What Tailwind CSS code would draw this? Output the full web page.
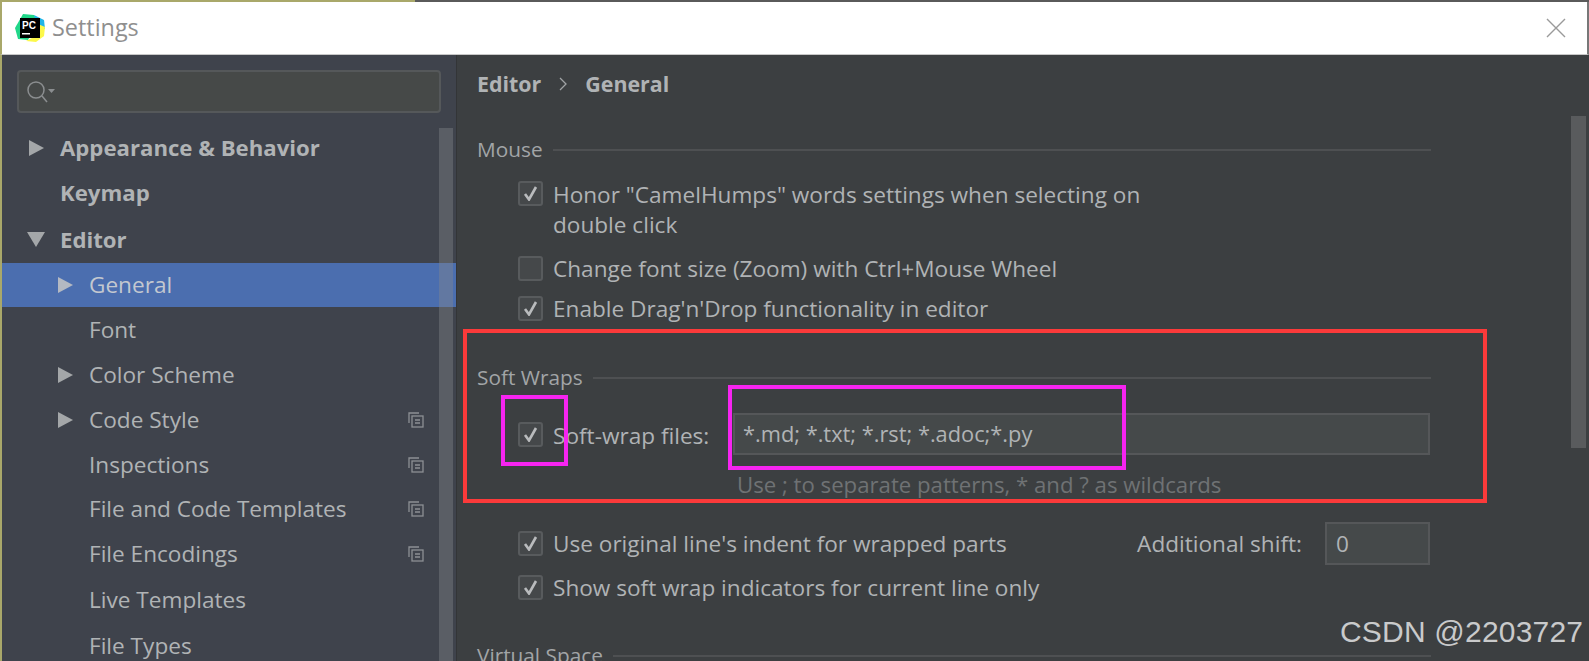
<!DOCTYPE html>
<html lang="en">
<head>
  <meta charset="UTF-8" />
  <title>Settings</title>
  <script src="https://cdn.jsdelivr.net/npm/@tailwindcss/browser@4"></script>
</head>
<body class="relative w-[1589px] h-[661px] overflow-hidden bg-[#3c3f41] font-['Open_Sans',sans-serif] text-[22.6px] text-[#b0b3b5]">

  <!-- Window top edge -->
  <div class="flex h-[2px]">
    <div class="w-[415px] bg-[#a9a86a]"></div>
    <div class="flex-1 bg-[#5a5a5a]"></div>
  </div>

  <!-- Title bar -->
  <header class="flex items-center h-[53px] bg-white border-l-2 border-b border-r-2 border-l-[#a9a86a] border-b-[#c8c8c8] border-r-[#777]">
    <svg class="ml-[12px] w-[32px] h-[32px]" viewBox="0 0 32 32">
      <polygon points="9,2 20,3 24,10 14,28 4,27 1,16" fill="#21d789"/>
      <polygon points="20,3 30,8 31,17 24,16" fill="#1fb5e8"/>
      <polygon points="12,29 30,20 30,24 22,30" fill="#fcf84a"/>
      <polygon points="24,12 31,15 30,24 22,26" fill="#fcf84a"/>
      <rect x="6" y="6" width="20" height="20" fill="#000"/>
      <text x="8" y="16.5" font-size="10" font-weight="700" fill="#fff" font-family="Liberation Sans">PC</text>
      <rect x="8" y="21" width="8" height="1.5" fill="#fff"/>
    </svg>
    <span class="ml-[6px] text-[#8f8f8f] text-[23.4px]">Settings</span>
    <svg class="ml-auto mr-[21px] w-[20px] h-[20px]" viewBox="0 0 20 20" stroke="#9a9a9a" stroke-width="1.4"><path d="M1 1 L19 19 M19 1 L1 19"/></svg>
  </header>

  <div class="flex h-[606px]">
    <!-- Sidebar -->
    <aside class="relative shrink-0 w-[457px] bg-[#3f434c] border-l-2 border-l-[#a9a86a] border-r border-r-[#333537]">
      <div class="flex items-center mt-[15px] ml-[15px] w-[424px] h-[43px] rounded-[4px] border-2 border-[#55585a] bg-[#464948] pl-[7px]">
        <svg class="w-[30px] h-[26px]" viewBox="0 0 30 26" fill="none" stroke="#8b8e90" stroke-width="1.5">
          <circle cx="10" cy="11" r="8"/><path d="M16 17 L21 23"/><path d="M22 10 h7 l-3.5 4 z" fill="#8b8e90" stroke="none"/>
        </svg>
      </div>

      <nav class="mt-[12px]">
        <div class="flex items-center h-[45px] pl-[27px] font-bold text-[22.2px]">
          <svg class="w-[15px] h-[16px] mr-[16px]" viewBox="0 0 15 16" fill="#a4a7a9"><path d="M0 0 L15 8 L0 16 Z"/></svg>Appearance &amp; Behavior
        </div>
        <div class="flex items-center h-[46px] pl-[58px] font-bold text-[22.2px]">Keymap</div>
        <div class="flex items-center h-[47px] pl-[25px] font-bold text-[22.2px]">
          <svg class="w-[18px] h-[15px] mr-[15px]" viewBox="0 0 18 15" fill="#a4a7a9"><path d="M0 0 H18 L9 15 Z"/></svg>Editor
        </div>
        <div class="flex items-center h-[44px] pl-[56px] bg-[#4b6eaf] text-[#c3c8d0]">
          <svg class="w-[15px] h-[16px] mr-[16px]" viewBox="0 0 15 16" fill="#b4b9c2"><path d="M0 0 L15 8 L0 16 Z"/></svg>General
        </div>
        <div class="flex items-center h-[45px] pl-[87px]">Font</div>
        <div class="flex items-center h-[45px] pl-[56px]">
          <svg class="w-[15px] h-[16px] mr-[16px]" viewBox="0 0 15 16" fill="#a4a7a9"><path d="M0 0 L15 8 L0 16 Z"/></svg>Color Scheme
        </div>
        <div class="flex items-center h-[45px] pl-[56px]">
          <svg class="w-[15px] h-[16px] mr-[16px]" viewBox="0 0 15 16" fill="#a4a7a9"><path d="M0 0 L15 8 L0 16 Z"/></svg>Code Style
          <svg class="ml-auto mr-[32px] w-[16px] h-[16px]" viewBox="0 0 16 16" fill="none" stroke="#8d9094" stroke-width="1.3"><path d="M11 1 H1 V11"/><rect x="4" y="4" width="11" height="11"/><path d="M7 8 H12 M7 11 H12"/></svg>
        </div>
        <div class="flex items-center h-[45px] pl-[87px]">Inspections
          <svg class="ml-auto mr-[32px] w-[16px] h-[16px]" viewBox="0 0 16 16" fill="none" stroke="#8d9094" stroke-width="1.3"><path d="M11 1 H1 V11"/><rect x="4" y="4" width="11" height="11"/><path d="M7 8 H12 M7 11 H12"/></svg>
        </div>
        <div class="flex items-center h-[44px] pl-[87px]">File and Code Templates
          <svg class="ml-auto mr-[32px] w-[16px] h-[16px]" viewBox="0 0 16 16" fill="none" stroke="#8d9094" stroke-width="1.3"><path d="M11 1 H1 V11"/><rect x="4" y="4" width="11" height="11"/><path d="M7 8 H12 M7 11 H12"/></svg>
        </div>
        <div class="flex items-center h-[46px] pl-[87px]">File Encodings
          <svg class="ml-auto mr-[32px] w-[16px] h-[16px]" viewBox="0 0 16 16" fill="none" stroke="#8d9094" stroke-width="1.3"><path d="M11 1 H1 V11"/><rect x="4" y="4" width="11" height="11"/><path d="M7 8 H12 M7 11 H12"/></svg>
        </div>
        <div class="flex items-center h-[46px] pl-[87px]">Live Templates</div>
        <div class="flex items-center h-[45px] pl-[87px]">File Types</div>
      </nav>

      <!-- Sidebar scrollbar thumb -->
      <div class="absolute left-[437px] top-[73px] bottom-0 w-[14px] bg-[#85878c]/40"></div>
    </aside>

    <!-- Content -->
    <main class="relative flex-1 pl-[20px]">
      <div class="flex items-center h-[30px] mt-[14px] font-bold text-[21.4px]">
        Editor
        <svg class="mx-[18px] w-[8px] h-[14px]" viewBox="0 0 8 14" fill="none" stroke="#a0a3a5" stroke-width="1.3"><path d="M1 1 L7 7 L1 13"/></svg>
        General
      </div>

      <div class="flex items-center mt-[39px] h-[24px] text-[20.8px] text-[#a2a5a7] w-[954px]">Mouse<div class="flex-1 h-[2px] ml-[10px] bg-[#4e5052]"></div></div>

      <div class="flex items-start mt-[19px] ml-[41px] h-[63px] w-[640px]">
        <span class="flex shrink-0 items-center justify-center w-[25px] h-[25px] rounded-[3px] border-2 border-[#585b5d] bg-[#45484a]"><svg class="w-[15px] h-[15px]" viewBox="0 0 15 15" fill="none" stroke="#b9bbbd" stroke-width="2.6"><path d="M2 8 L6 13.5 L13 1"/></svg></span>
        <span class="ml-[10px] leading-[30px] -mt-[1px]">Honor "CamelHumps" words settings when selecting on double click</span>
      </div>

      <div class="flex items-center mt-[12px] ml-[41px] h-[25px]">
        <span class="flex shrink-0 items-center justify-center w-[25px] h-[25px] rounded-[3px] border-2 border-[#585b5d] bg-[#45484a]"></span>
        <span class="ml-[10px]">Change font size (Zoom) with Ctrl+Mouse Wheel</span>
      </div>

      <div class="flex items-center mt-[15px] ml-[41px] h-[25px]">
        <span class="flex shrink-0 items-center justify-center w-[25px] h-[25px] rounded-[3px] border-2 border-[#585b5d] bg-[#45484a]"><svg class="w-[15px] h-[15px]" viewBox="0 0 15 15" fill="none" stroke="#b9bbbd" stroke-width="2.6"><path d="M2 8 L6 13.5 L13 1"/></svg></span>
        <span class="ml-[10px]">Enable Drag'n'Drop functionality in editor</span>
      </div>

      <div class="flex items-center mt-[45px] h-[24px] text-[20.8px] text-[#a2a5a7] w-[954px]">Soft Wraps<div class="flex-1 h-[2px] ml-[10px] bg-[#4e5052]"></div></div>

      <div class="flex items-center mt-[23px] ml-[41px] h-[42px] w-[912px]">
        <span class="flex shrink-0 items-center justify-center w-[25px] h-[25px] rounded-[3px] border-2 border-[#585b5d] bg-[#45484a]"><svg class="w-[15px] h-[15px]" viewBox="0 0 15 15" fill="none" stroke="#b9bbbd" stroke-width="2.6"><path d="M2 8 L6 13.5 L13 1"/></svg></span>
        <span class="ml-[10px] mt-[3px] w-[180px] shrink-0">Soft-wrap files:</span>
        <div class="flex items-center flex-1 h-[42px] pl-[8px] text-[21.8px] border-2 border-[#555759] bg-[#45494a]">*.md; *.txt; *.rst; *.adoc;*.py</div>
      </div>
      <div class="h-[30px] mt-[15px] ml-[260px] leading-[30px] text-[22.2px] text-[#6f7274]">Use ; to separate patterns, * and ? as wildcards</div>

      <div class="flex items-center mt-[22px] ml-[41px] h-[43px] w-[912px]">
        <span class="flex shrink-0 items-center justify-center w-[25px] h-[25px] rounded-[3px] border-2 border-[#585b5d] bg-[#45484a]"><svg class="w-[15px] h-[15px]" viewBox="0 0 15 15" fill="none" stroke="#b9bbbd" stroke-width="2.6"><path d="M2 8 L6 13.5 L13 1"/></svg></span>
        <span class="ml-[10px]">Use original line's indent for wrapped parts</span>
        <span class="ml-auto">Additional shift:</span>
        <div class="flex items-center w-[105px] h-[43px] ml-[23px] pl-[9px] border-2 border-[#555759] bg-[#45494a]">0</div>
      </div>

      <div class="flex items-center mt-[10px] ml-[41px] h-[25px]">
        <span class="flex shrink-0 items-center justify-center w-[25px] h-[25px] rounded-[3px] border-2 border-[#585b5d] bg-[#45484a]"><svg class="w-[15px] h-[15px]" viewBox="0 0 15 15" fill="none" stroke="#b9bbbd" stroke-width="2.6"><path d="M2 8 L6 13.5 L13 1"/></svg></span>
        <span class="ml-[10px]">Show soft wrap indicators for current line only</span>
      </div>

      <div class="flex items-center mt-[44px] h-[24px] text-[20.8px] text-[#a2a5a7] w-[954px]">Virtual Space<div class="flex-1 h-[2px] ml-[10px] bg-[#4e5052]"></div></div>

      <!-- Content scrollbar thumb -->
      <div class="absolute left-[1114px] top-[61px] w-[15px] h-[332px] bg-[#595b5d]"></div>
    </main>
  </div>

  <!-- Annotations drawn over the screenshot -->
  <div class="absolute left-[463px] top-[329px] w-[1024px] h-[174px] border-4 border-[#fb3a3a]"></div>
  <div class="absolute left-[501px] top-[395px] w-[67px] h-[71px] border-4 border-[#f624f0]"></div>
  <div class="absolute left-[728px] top-[385px] w-[398px] h-[85px] border-4 border-[#f624f0]"></div>
  <div class="absolute left-[1340px] top-[609px] font-['Liberation_Sans',sans-serif] text-[30px] tracking-[0.2px] text-[#c9cacb]">CSDN @2203727</div>
</body>
</html>
